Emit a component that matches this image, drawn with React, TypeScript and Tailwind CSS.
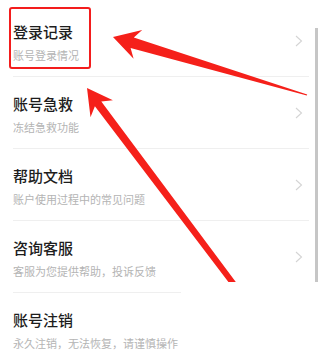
import { type FC } from "react";

type Item = { title: string; desc: string; chevron: boolean; divider: string | null };

const items: Item[] = [
  { title: "登录记录", desc: "账号登录情况", chevron: true, divider: "w-[296px]" },
  { title: "账号急救", desc: "冻结急救功能", chevron: true, divider: "w-[296px]" },
  { title: "帮助文档", desc: "账户使用过程中的常见问题", chevron: true, divider: "w-[296px]" },
  { title: "咨询客服", desc: "客服为您提供帮助，投诉反馈", chevron: true, divider: "w-[168px]" },
  { title: "账号注销", desc: "永久注销，无法恢复，请谨慎操作", chevron: false, divider: null },
];

const Chevron: FC = () => (
  <svg width="8" height="12" viewBox="0 0 8 12" className="shrink-0">
    <path d="M1 1l5.5 5L1 11" fill="none" stroke="#d4d4d4" strokeWidth="1.1" />
  </svg>
);

const Arrows: FC = () => (
  <svg
    className="absolute left-0 top-0 pointer-events-none"
    width="322"
    height="354"
    viewBox="0 0 322 354"
  >
    {/* arrow pointing at 登录记录 */}
    <polygon
      fill="#f5201a"
      points="113,37 142.2,30 133.8,37.4 307.2,94.5 306.8,95.5 130.6,48 133.6,58.8"
    />
    {/* arrow pointing at the row below */}
    <polygon
      fill="#f5201a"
      points="87,88 112.9,100.2 101.3,101.5 235.8,282 228.4,282 94.9,106.3 90.5,117.2"
    />
  </svg>
);

export default function App() {
  return (
    <div
      className="relative w-[322px] h-[354px] overflow-hidden bg-white"
      style={{ fontFamily: '"Noto Sans CJK SC", "Noto Sans", sans-serif' }}
    >
      <div className="pt-[5px]">
        {items.map((item) => (
          <div key={item.title}>
            <div className="flex items-center h-[71px] pl-[13px] pr-[19px]">
              <div className="flex-1 flex flex-col pt-[3px]">
                <span className="text-[15px] leading-[20px] font-medium text-[#1d1d1d]">{item.title}</span>
                <span className="mt-[5px] text-[11px] leading-[16px] text-[#b4b4b4]">{item.desc}</span>
              </div>
              {item.chevron && <Chevron />}
            </div>
            {item.divider && <div className={`ml-[13px] h-px bg-[#efefef] ${item.divider}`} />}
          </div>
        ))}
      </div>

      {/* scroll indicator */}
      <div className="absolute left-[315px] top-[28px] w-[3px] h-[254px] bg-[#c6c6c6]" />

      {/* highlight box */}
      <div className="absolute left-[9px] top-[7px] w-[82px] h-[62px] border-[2.5px] border-[#f31d1d] rounded-[3px]" />

      <Arrows />
    </div>
  );
}
